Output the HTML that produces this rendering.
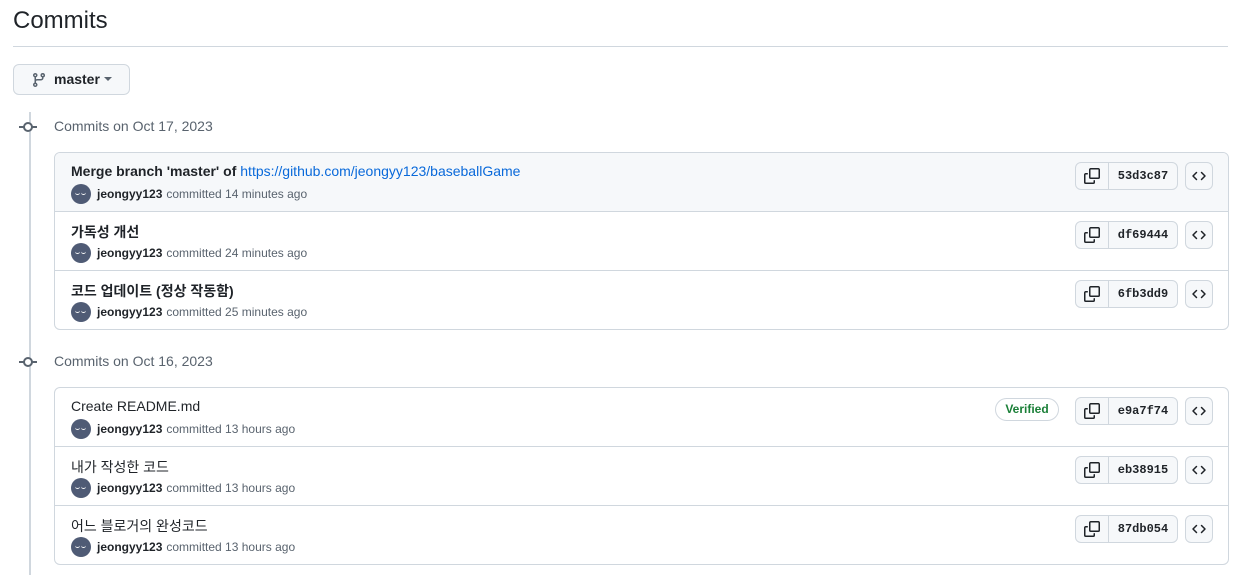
<!DOCTYPE html>
<html><head><meta charset="utf-8"><style>
body{margin:0;background:#fff;font-family:"Liberation Sans","Noto Sans CJK KR",sans-serif;color:#1f2328;width:1239px;height:585px;overflow:hidden;position:relative}
.abs{position:absolute}
h1{position:absolute;left:13px;top:7px;margin:0;font-size:24px;font-weight:400}
.hr{left:13px;top:46px;width:1215px;height:1px;background:#d0d7de}
.btn{left:13px;top:64px;width:115px;height:29px;border:1px solid #d0d7de;border-radius:6px;background:#f6f8fa;font-size:14px;font-weight:600}
.tl{left:29px;top:112px;width:2px;height:463px;background:#d0d7de}
.gh{left:54px;font-size:14px;color:#59636e}
.dot{left:23px;width:10px;height:10px;border:2px solid #59636e;border-radius:50%;box-sizing:border-box;background:#fff}
.dl{left:19px;width:18px;height:2px;background:#59636e}
.box{left:54px;width:1173px;border:1px solid #d0d7de;border-radius:6px;overflow:hidden}
.row{position:relative;height:58px;border-top:1px solid #d0d7de}
.row:first-child{border-top:0}
.t{position:absolute;left:16px;top:10px;font-size:14px;font-weight:600}
.t a{color:#0969da;font-weight:400;text-decoration:none}
.m{position:absolute;left:16px;top:31px;font-size:12px;color:#59636e;display:flex;align-items:center}
.m b{color:#1f2328;font-weight:600;margin:0 4px 0 6px}
.av{width:20px;height:20px;border-radius:50%;background:#4f5b75;position:relative}
.av:before,.av:after{content:"";position:absolute;top:7px;width:5px;height:3px;border-bottom:1.5px solid #fff;border-radius:0 0 4px 4px}
.av:before{left:4px}.av:after{left:10px}
.grp{position:absolute;left:1020px;top:9px;width:101px;height:26px;border:1px solid #d0d7de;border-radius:6px;background:#f6f8fa;display:flex}
.cp{width:32px;border-right:1px solid #d0d7de;display:flex;align-items:center;justify-content:center}
.h{flex:1;text-align:center;line-height:26px;font-family:"Liberation Mono",monospace;font-size:12px;font-weight:700;color:#1f2328}
.cd{position:absolute;left:1130px;top:9px;width:26px;height:26px;border:1px solid #d0d7de;border-radius:6px;background:#f6f8fa;display:flex;align-items:center;justify-content:center}
.ver{position:absolute;left:940px;top:10px;width:62px;height:21px;border:1px solid #d0d7de;border-radius:12px;color:#1a7f37;font-size:12px;font-weight:600;text-align:center;line-height:21px;background:#fff}
</style></head><body>
<h1>Commits</h1>
<div class="abs hr"></div>
<div class="abs btn"><svg class="abs" style="left:17px;top:7px" width="16" height="16" viewBox="0 0 16 16"><path fill="#59636e" d="M9.5 3.250a2.25 2.25 0 1 1 3 2.122V6A2.5 2.5 0 0 1 10 8.5H6a1 1 0 0 0-1 1v1.128a2.251 2.251 0 1 1-1.5 0V5.372a2.25 2.25 0 1 1 1.5 0v1.836A2.493 2.493 0 0 1 6 7h4a1 1 0 0 0 1-1v-.628A2.25 2.25 0 0 1 9.5 3.25Zm-6 0a.75.75 0 1 0 1.5 0 .75.75 0 0 0-1.5 0Zm8.25-.75a.75.75 0 1 0 0 1.5.75.75 0 0 0 0-1.5ZM4.25 12a.75.75 0 1 0 0 1.5.75.75 0 0 0 0-1.5Z"/></svg><span class="abs" style="left:40px;top:6px">master</span><span class="abs" style="left:90px;top:12px;border:4px solid transparent;border-top:4px solid #59636e"></span></div>
<div class="abs tl"></div>
<div class="abs dl" style="top:126px"></div><div class="abs dot" style="top:122px"></div>
<div class="abs gh" style="top:118px">Commits on Oct 17, 2023</div>
<div class="abs box" style="top:152px">
<div class="row" style="background:#f6f8fa"><div class="t">Merge branch 'master' of <a>https://github.com/jeongyy123/baseballGame</a></div><div class="m"><span class="av"></span><b>jeongyy123</b>committed 14 minutes ago</div>
<div class="grp"><div class="cp">CP</div><div class="h">53d3c87</div></div><div class="cd">CD</div></div>
<div class="row"><div class="t">가독성 개선</div><div class="m"><span class="av"></span><b>jeongyy123</b>committed 24 minutes ago</div><div class="grp"><div class="cp">CP</div><div class="h">df69444</div></div><div class="cd">CD</div></div>
<div class="row"><div class="t">코드 업데이트 (정상 작동함)</div><div class="m"><span class="av"></span><b>jeongyy123</b>committed 25 minutes ago</div><div class="grp"><div class="cp">CP</div><div class="h">6fb3dd9</div></div><div class="cd">CD</div></div>
</div>
<div class="abs dl" style="top:361px"></div><div class="abs dot" style="top:357px"></div>
<div class="abs gh" style="top:353px">Commits on Oct 16, 2023</div>
<div class="abs box" style="top:387px">
<div class="row"><div class="t" style="font-weight:400">Create README.md</div><div class="m"><span class="av"></span><b>jeongyy123</b>committed 13 hours ago</div><div class="ver">Verified</div><div class="grp"><div class="cp">CP</div><div class="h">e9a7f74</div></div><div class="cd">CD</div></div>
<div class="row"><div class="t" style="font-weight:400">내가 작성한 코드</div><div class="m"><span class="av"></span><b>jeongyy123</b>committed 13 hours ago</div><div class="grp"><div class="cp">CP</div><div class="h">eb38915</div></div><div class="cd">CD</div></div>
<div class="row"><div class="t" style="font-weight:400">어느 블로거의 완성코드</div><div class="m"><span class="av"></span><b>jeongyy123</b>committed 13 hours ago</div><div class="grp"><div class="cp">CP</div><div class="h">87db054</div></div><div class="cd">CD</div></div>
</div>
<script>
var cp='<svg width="16" height="16" viewBox="0 0 16 16"><path fill="#1f2328" d="M0 6.75C0 5.784.784 5 1.75 5h1.5a.75.75 0 0 1 0 1.5h-1.5a.25.25 0 0 0-.25.25v7.5c0 .138.112.25.25.25h7.5a.25.25 0 0 0 .25-.25v-1.5a.75.75 0 0 1 1.5 0v1.5A1.75 1.75 0 0 1 9.25 16h-7.5A1.75 1.75 0 0 1 0 14.25Z"/><path fill="#1f2328" d="M5 1.75C5 .784 5.784 0 6.75 0h7.5C15.216 0 16 .784 16 1.75v7.5A1.75 1.75 0 0 1 14.25 11h-7.5A1.75 1.75 0 0 1 5 9.25Zm1.75-.25a.25.25 0 0 0-.25.25v7.5c0 .138.112.25.25.25h7.5a.25.25 0 0 0 .25-.25v-7.5a.25.25 0 0 0-.25-.25Z"/></svg>';
var cd='<svg width="16" height="16" viewBox="0 0 16 16"><path fill="none" stroke="#1f2328" stroke-width="1.5" stroke-linecap="round" stroke-linejoin="round" d="M5.5 4.5 2 8l3.5 3.5M10.5 4.5 14 8l-3.5 3.5"/></svg>';
document.querySelectorAll('.cp').forEach(e=>e.innerHTML=cp);
document.querySelectorAll('.cd').forEach(e=>e.innerHTML=cd);
</script>
</body></html>
